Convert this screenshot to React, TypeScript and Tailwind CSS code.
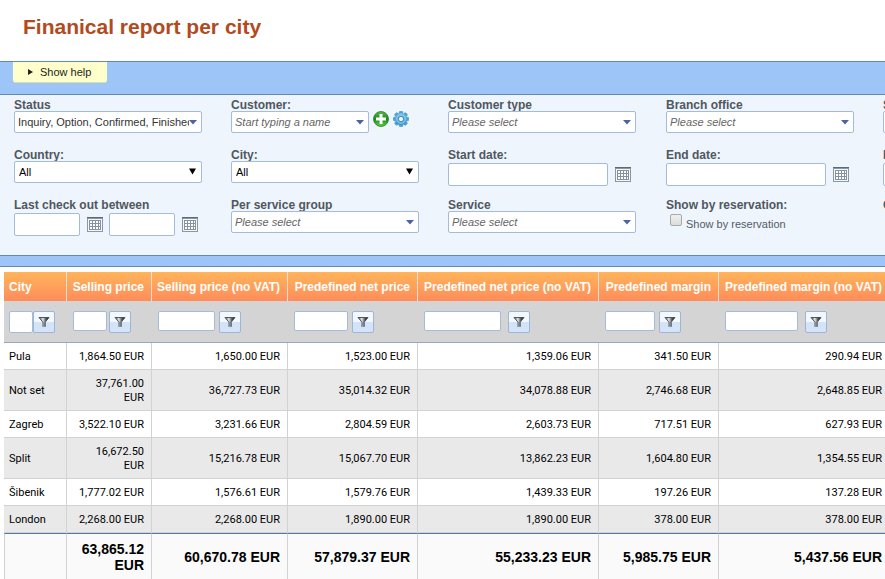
import { useState } from "react";
import type { ReactNode } from "react";

const columns = [
  { title: "City", col: "w-[63px]", input: "w-6 h-[22px]", gap: "gap-0" },
  { title: "Selling price", col: "w-[85px]", input: "w-[34px] h-5", gap: "gap-[2px]" },
  { title: "Selling price (no VAT)", col: "w-[136px]", input: "w-[57px] h-5", gap: "gap-1" },
  { title: "Predefined net price", col: "w-[130px]", input: "w-[54px] h-5", gap: "gap-1" },
  { title: "Predefined net price (no VAT)", col: "w-[181px]", input: "w-[77px] h-5", gap: "gap-[7px]" },
  { title: "Predefined margin", col: "w-[120px]", input: "w-[50px] h-5", gap: "gap-1" },
  { title: "Predefined margin (no VAT)", col: "w-[171px]", input: "w-[73px] h-5", gap: "gap-[7px]" },
];

const rows = [
  ["Pula", "1,864.50 EUR", "1,650.00 EUR", "1,523.00 EUR", "1,359.06 EUR", "341.50 EUR", "290.94 EUR"],
  ["Not set", "37,761.00 EUR", "36,727.73 EUR", "35,014.32 EUR", "34,078.88 EUR", "2,746.68 EUR", "2,648.85 EUR"],
  ["Zagreb", "3,522.10 EUR", "3,231.66 EUR", "2,804.59 EUR", "2,603.73 EUR", "717.51 EUR", "627.93 EUR"],
  ["Split", "16,672.50 EUR", "15,216.78 EUR", "15,067.70 EUR", "13,862.23 EUR", "1,604.80 EUR", "1,354.55 EUR"],
  ["Šibenik", "1,777.02 EUR", "1,576.61 EUR", "1,579.76 EUR", "1,439.33 EUR", "197.26 EUR", "137.28 EUR"],
  ["London", "2,268.00 EUR", "2,268.00 EUR", "1,890.00 EUR", "1,890.00 EUR", "378.00 EUR", "378.00 EUR"],
];

const totals = ["", "63,865.12 EUR", "60,670.78 EUR", "57,879.37 EUR", "55,233.23 EUR", "5,985.75 EUR", "5,437.56 EUR"];

const box = "rounded-[2px] border border-[#a5bbdc] bg-white text-[11px] outline-none";

function CalendarIcon() {
  return (
    <svg width="16" height="15" viewBox="0 0 16 15" shapeRendering="crispEdges">
      <rect x="0" y="0" width="16" height="15" fill="#8b97a3" />
      <rect x="0" y="0" width="16" height="1" fill="#5c6a77" />
      <rect x="1" y="2" width="14" height="12" fill="#f4f8fb" />
      <rect x="2" y="3" width="12" height="10" fill="#8593a1" />
      {[3, 6, 9, 12].map((x) =>
        [3, 6, 9].map((y) => (
          <rect key={`${x}-${y}`} x={x} y={y + 1} width={x === 12 ? 1 : 2} height="2" fill="#ffffff" />
        ))
      )}
    </svg>
  );
}

function AddIcon() {
  return (
    <svg width="16" height="16" viewBox="0 0 16 16">
      <defs>
        <linearGradient id="add" x1="0" y1="0" x2="0" y2="1">
          <stop offset="0" stopColor="#5cb84a" />
          <stop offset="0.5" stopColor="#168a1b" />
          <stop offset="1" stopColor="#5fd047" />
        </linearGradient>
      </defs>
      <circle cx="8" cy="8" r="7.5" fill="url(#add)" stroke="#23812a" strokeWidth="0.8" />
      <path d="M6.5 3h3v3.5H13v3H9.5V13h-3V9.5H3v-3h3.5z" fill="#fff" />
    </svg>
  );
}

function GearIcon() {
  return (
    <svg width="16" height="16" viewBox="0 0 16 16">
      <defs>
        <linearGradient id="gear" gradientUnits="userSpaceOnUse" x1="0" y1="0" x2="0" y2="16">
          <stop offset="0" stopColor="#7cc4e8" />
          <stop offset="1" stopColor="#2f8cc4" />
        </linearGradient>
      </defs>
      {[0, 45, 90, 135].map((deg) => (
        <rect
          key={deg}
          x="6.2"
          y="0.3"
          width="3.6"
          height="15.4"
          rx="1"
          fill="#4ba3d3"
          stroke="#3a8dbe"
          strokeWidth="0.5"
          transform={`rotate(${deg} 8 8)`}
        />
      ))}
      <circle cx="8" cy="8" r="6.1" fill="url(#gear)" />
      <circle cx="8" cy="8" r="4.2" fill="none" stroke="#9ad6f0" strokeWidth="1" />
      <circle cx="8" cy="8" r="2.6" fill="#eef5fc" stroke="#2f7fb0" strokeWidth="0.8" />
    </svg>
  );
}

function FunnelIcon() {
  return (
    <svg width="12" height="12" viewBox="0 0 12 12">
      <defs>
        <linearGradient id="funnel" gradientUnits="userSpaceOnUse" x1="2" y1="0" x2="9" y2="0">
          <stop offset="0" stopColor="#6b727a" />
          <stop offset="0.4" stopColor="#e4e9ef" />
          <stop offset="0.75" stopColor="#6a7078" />
          <stop offset="1" stopColor="#33373c" />
        </linearGradient>
      </defs>
      <path d="M1 1.5h10L7.2 6v4.8H5V6z" fill="url(#funnel)" />
      <path d="M0.8 1.5h10.4M1.2 1.8L5 6.2v4.6M10.8 1.8L7.2 6.2v4.6" fill="none" stroke="#44494f" strokeWidth="0.9" />
    </svg>
  );
}

function Field({ label, htmlFor, children }: { label: string; htmlFor: string; children: ReactNode }) {
  return (
    <div className="h-[50px]">
      <label htmlFor={htmlFor} className="block h-[14px] whitespace-nowrap text-xs leading-4 font-bold text-[#505760]">
        {label}
      </label>
      {children}
    </div>
  );
}

function Combo({ id, value, italic = true }: { id: string; value: string; italic?: boolean }) {
  return (
    <div className="relative w-[188px]">
      <select
        id={id}
        className={`${box} block h-[22px] w-full appearance-none pl-[3px] pr-3 ${italic ? "text-[#666] italic" : "text-[#333]"}`}
      >
        <option>{value}</option>
      </select>
      <ComboArrow />
    </div>
  );
}

function ComboArrow() {
  return (
    <svg className="pointer-events-none absolute top-[9px] right-[5px]" width="8" height="5" viewBox="0 0 8 5">
      <path d="M0 0h8L4 4.6z" fill="#4b62a5" />
    </svg>
  );
}

function ListSelect({ id }: { id: string }) {
  return (
    <div className="relative w-[188px]">
      <select id={id} className={`${box} block h-[22px] w-full appearance-none pl-1 text-black`}>
        <option>All</option>
      </select>
      <svg className="pointer-events-none absolute top-[7px] right-[6px]" width="7" height="7" viewBox="0 0 7 7">
        <path d="M0 0.5h7L3.5 6.5z" fill="#000" />
      </svg>
    </div>
  );
}

function DateField({ id, label, width }: { id: string; label: string; width: string }) {
  return (
    <div className="flex items-center gap-[7px]">
      <input id={id} type="text" aria-label={label} className={`${box} ${width} h-[23px] px-1`} />
      <button type="button" aria-label={`Pick ${label}`}>
        <CalendarIcon />
      </button>
    </div>
  );
}

function Filters() {
  const [byReservation, setByReservation] = useState(false);

  return (
    <form className="grid grid-cols-[217px_217px_218px_217px_217px] overflow-hidden border-y border-[#6389b5] bg-[#eef5fc] pt-[2px] pb-2 pl-[14px]">
      <Field label="Status" htmlFor="status">
        <Combo id="status" value="Inquiry, Option, Confirmed, Finished" italic={false} />
      </Field>
      <Field label="Customer:" htmlFor="customer">
        <div className="flex gap-1">
          <div className="relative w-[138px]">
            <input
              id="customer"
              type="text"
              placeholder="Start typing a name"
              className={`${box} block h-[22px] w-full pl-[3px] placeholder:text-[#666] placeholder:italic`}
            />
            <ComboArrow />
          </div>
          <button type="button" aria-label="Add customer" className="h-4">
            <AddIcon />
          </button>
          <button type="button" aria-label="Customer settings" className="h-4">
            <GearIcon />
          </button>
        </div>
      </Field>
      <Field label="Customer type" htmlFor="customer-type">
        <Combo id="customer-type" value="Please select" />
      </Field>
      <Field label="Branch office" htmlFor="branch">
        <Combo id="branch" value="Please select" />
      </Field>
      <Field label="S" htmlFor="extra-1">
        <Combo id="extra-1" value="" />
      </Field>

      <Field label="Country:" htmlFor="country">
        <ListSelect id="country" />
      </Field>
      <Field label="City:" htmlFor="city">
        <ListSelect id="city" />
      </Field>
      <Field label="Start date:" htmlFor="start-date">
        <div className="pt-[2px]">
          <DateField id="start-date" label="Start date" width="w-[160px]" />
        </div>
      </Field>
      <Field label="End date:" htmlFor="end-date">
        <div className="pt-[2px]">
          <DateField id="end-date" label="End date" width="w-[160px]" />
        </div>
      </Field>
      <Field label="E" htmlFor="extra-2">
        <div className="pt-[2px]">
          <DateField id="extra-2" label="E" width="w-[160px]" />
        </div>
      </Field>

      <Field label="Last check out between" htmlFor="checkout-from">
        <div className="flex gap-[6px] pt-[2px]">
          <DateField id="checkout-from" label="Last check out from" width="w-[66px]" />
          <DateField id="checkout-to" label="Last check out to" width="w-[66px]" />
        </div>
      </Field>
      <Field label="Per service group" htmlFor="service-group">
        <Combo id="service-group" value="Please select" />
      </Field>
      <Field label="Service" htmlFor="service">
        <Combo id="service" value="Please select" />
      </Field>
      <Field label="Show by reservation:" htmlFor="by-reservation">
        <div className="flex gap-1 pt-[3px] pl-1">
          <input
            id="by-reservation"
            type="checkbox"
            checked={byReservation}
            onChange={(e) => setByReservation(e.target.checked)}
            className="size-3 appearance-none rounded-[2px] border border-[#a9a9a9] bg-linear-to-b from-[#f0f0f0] to-[#dcdcdc] checked:from-[#6389b5] checked:to-[#6389b5]"
          />
          <label htmlFor="by-reservation" className="pt-[3px] text-[11px] leading-[14px] text-[#555b66]">
            Show by reservation
          </label>
        </div>
      </Field>
      <Field label="C" htmlFor="extra-3">
        <span id="extra-3" />
      </Field>
    </form>
  );
}

function ReportTable() {
  return (
    <table className="w-[886px] table-fixed border-separate border-spacing-0 text-[11px] leading-[14px] text-black">
      <colgroup>
        {columns.map((c) => (
          <col key={c.title} className={c.col} />
        ))}
      </colgroup>
      <thead>
        <tr className="h-[29px] bg-linear-to-b from-[#ffb45a] to-[#ff8c5a] text-right text-xs text-white">
          {columns.map((c) => (
            <th
              key={c.title}
              scope="col"
              className="border-r border-[#e6dfda] pr-[7px] pl-[5px] font-bold whitespace-nowrap first:text-left"
            >
              {c.title}
            </th>
          ))}
        </tr>
        <tr className="h-[42px] bg-[#d4d4d4]">
          {columns.map((c) => (
            <td key={c.title} className="border-b border-[#93a9c2] pl-[6px] first:pl-[5px]">
              <div className={`flex ${c.gap}`}>
                <input type="text" aria-label={`Filter ${c.title}`} className={`${box} ${c.input}`} />
                <button
                  type="button"
                  aria-label={`Apply filter on ${c.title}`}
                  className="flex size-[22px] shrink-0 items-center justify-center rounded-[2px] border border-[#9db6d8] bg-linear-to-b from-[#f3f8fe] from-50% to-[#d3e4f8] to-50%"
                >
                  <FunnelIcon />
                </button>
              </div>
            </td>
          ))}
        </tr>
      </thead>
      <tbody className="font-[Roboto,sans-serif]">
        {rows.map((row) => (
          <tr key={row[0]} className="text-right odd:bg-white even:bg-[#e9e9e9]">
            {row.map((cell, i) => (
              <td
                key={i}
                className="border-r border-b border-[#d2d2d2] pt-[7px] pr-[7px] pb-[5px] pl-2 first:pl-[5px] first:text-left"
              >
                {cell}
              </td>
            ))}
          </tr>
        ))}
      </tbody>
      <tfoot>
        <tr className="h-[46px] bg-[#fafafa] text-right text-sm leading-4 font-bold">
          {totals.map((total, i) => (
            <td
              key={i}
              className="border-t border-r border-t-[#5577a8] border-r-[#d2d2d2] pr-[7px] pl-[5px] first:border-l first:border-l-[#d2d2d2]"
            >
              {total}
            </td>
          ))}
        </tr>
      </tfoot>
    </table>
  );
}

export default function App() {
  return (
    <div className="overflow-x-hidden bg-white font-['Liberation_Sans',Arial,sans-serif]">
      <h1 className="px-[23px] pt-[14px] pb-[21px] text-[21px] leading-[26px] font-bold text-[#b34a1e]">
        Finanical report per city
      </h1>

      <div className="h-[33px] border-t border-[#6389b5] bg-[#9ec5f8] pl-[13px]">
        <button
          type="button"
          className="flex h-[21px] w-[94px] items-center gap-[7px] rounded-b-[3px] border-b border-[#d9dfa8] bg-[#ffffcc] pl-[15px] text-[11px] text-[#222]"
        >
          <svg width="5" height="6" viewBox="0 0 5 6">
            <path d="M0 0l5 3-5 3z" fill="#222" />
          </svg>
          Show help
        </button>
      </div>
      <Filters />
      <div className="h-[11px] border-b border-[#6389b5] bg-[#9ec5f8]" />

      <div className="pt-[5px] pl-1">
        <ReportTable />
      </div>
    </div>
  );
}
